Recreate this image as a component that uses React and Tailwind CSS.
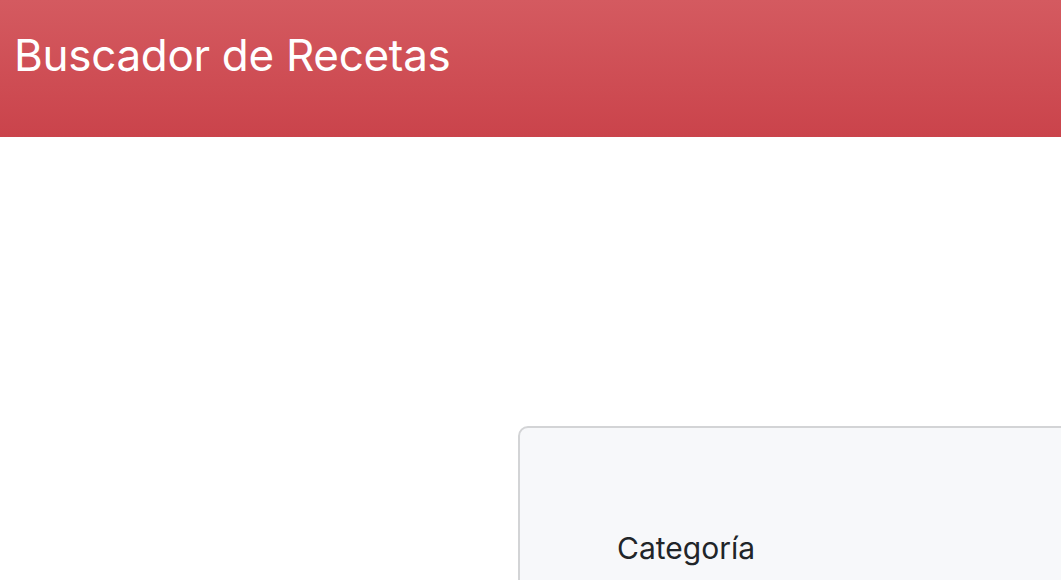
import React from "react";

const App = () => {
  return (
    <div
      className="w-[1061px] h-[580px] overflow-hidden bg-white"
      style={{ fontFamily: "Inter, 'Noto Sans', sans-serif" }}
    >
      {/* Header */}
      <header className="h-[137px] bg-gradient-to-b from-[#d45a60] to-[#ca434b] px-[14px] pt-[25px]">
        <h1 className="text-[44px] leading-[60px] text-white font-normal tracking-[-0.3px]">
          Buscador de Recetas
        </h1>
      </header>

      {/* Filter card */}
      <div className="pt-[289px] pl-[518px]">
        <div className="w-[720px] h-[300px] rounded-[10px] border-2 border-[#d3d4d6] bg-[#f7f8fa] pt-[100px] pl-[97px]">
          <label className="text-[30px] leading-[40px] text-[#212529]">
            Categoría
          </label>
        </div>
      </div>
    </div>
  );
};

export default App;
